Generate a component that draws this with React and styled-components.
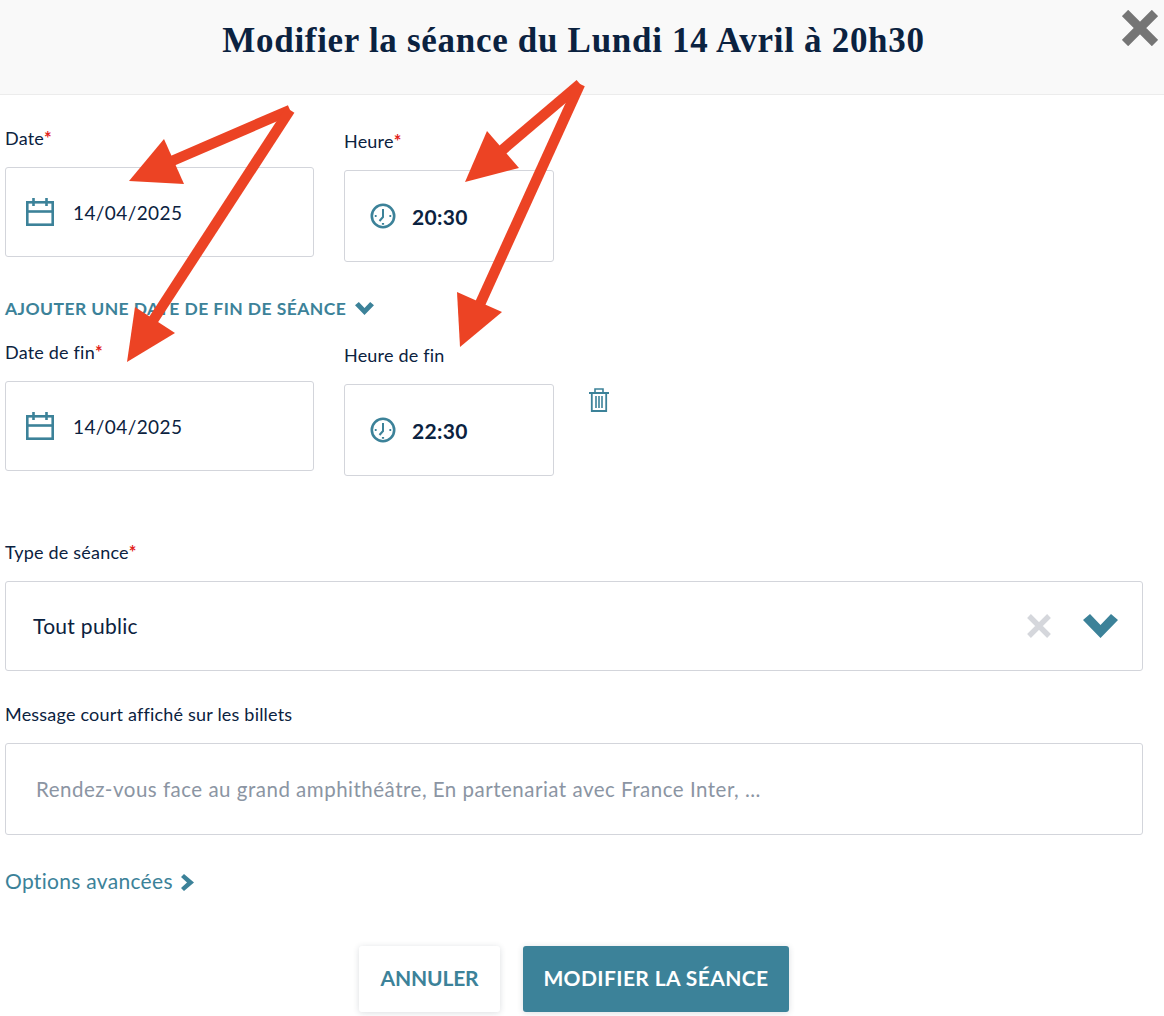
import React from 'react';
import styled, { createGlobalStyle } from 'styled-components';

const TEAL = '#3c8299';
const NAVY = '#0b2240';
const BORDER = '#d3d5db';
const RED = '#ec4324';

const GlobalStyle = createGlobalStyle`
  html, body {
    margin: 0;
    padding: 0;
    background: #fff;
  }
  body {
    font-family: Lato, "Open Sans", sans-serif;
    color: ${NAVY};
  }
`;

const Page = styled.div`
  position: relative;
  width: 1164px;
  height: 1016px;
  overflow: hidden;
`;

const Header = styled.header`
  box-sizing: border-box;
  height: 95px;
  padding: 19px 17px 0 0;
  background: #f9f9f9;
  border-bottom: 1px solid #ececec;
  text-align: center;
`;

const Title = styled.h1`
  margin: 0;
  font-family: "Liberation Serif", serif;
  font-weight: 700;
  font-size: 35px;
  line-height: 44px;
  letter-spacing: 0.7px;
  color: ${NAVY};
`;

const CloseButton = styled.button`
  position: absolute;
  top: 10px;
  right: 6px;
  width: 36px;
  height: 36px;
  padding: 0;
  border: none;
  background: none;
`;

const Form = styled.form`
  padding: 0 21px 0 5px;
`;

const DateRow = styled.div`
  display: flex;
  gap: 30px;
  padding-top: ${(props) => props.$top}px;
`;

const Field = styled.div`
  width: ${(props) => props.$width}px;
  padding-top: ${(props) => props.$offset || 0}px;
`;

const Label = styled.label`
  display: block;
  height: 24px;
  font-size: 18px;
  line-height: 22px;
  letter-spacing: 0.2px;
  margin-bottom: ${(props) => props.$gap}px;
  color: ${NAVY};
`;

const Star = styled.span`
  font-weight: 700;
  color: #e2231a;
`;

const InputBox = styled.div`
  box-sizing: border-box;
  display: flex;
  align-items: center;
  height: ${(props) => props.$height}px;
  padding-left: ${(props) => props.$pad}px;
  gap: ${(props) => props.$iconGap}px;
  border: 1px solid ${BORDER};
  border-radius: 3px;
  background: #fff;
`;

const DateValue = styled.span`
  font-size: 19px;
  letter-spacing: 0.4px;
  color: ${NAVY};
`;

const TimeValue = styled.span`
  font-size: 21px;
  font-weight: 700;
  letter-spacing: 0.3px;
  color: ${NAVY};
`;

const AddEndDate = styled.a`
  display: flex;
  align-items: center;
  gap: 9px;
  height: 24px;
  margin-top: 34px;
  font-size: 17.5px;
  font-weight: 700;
  letter-spacing: 0.42px;
  color: ${TEAL};
`;

const TrashButton = styled.button`
  align-self: flex-start;
  margin: 47px 0 0 5px;
  padding: 0;
  border: none;
  background: none;
  height: 24px;
`;

const TypeSection = styled.div`
  padding-top: 65px;
`;

const MessageSection = styled.div`
  padding-top: 32px;
`;

const SelectBox = styled.div`
  box-sizing: border-box;
  display: flex;
  align-items: center;
  justify-content: space-between;
  height: 90px;
  padding: 0 24px 0 27px;
  border: 1px solid ${BORDER};
  border-radius: 3px;
`;

const SelectValue = styled.span`
  padding-bottom: 2px;
  font-size: 21px;
  letter-spacing: 0.3px;
  color: ${NAVY};
`;

const SelectIcons = styled.div`
  display: flex;
  align-items: center;
  gap: 32px;
`;

const TextBox = styled.div`
  box-sizing: border-box;
  display: flex;
  align-items: center;
  height: 92px;
  padding-left: 30px;
  border: 1px solid ${BORDER};
  border-radius: 3px;
  font-size: 20.5px;
  letter-spacing: 0.5px;
  color: #8b95a3;
`;

const AdvancedLink = styled.a`
  display: flex;
  align-items: center;
  gap: 8px;
  height: 26px;
  margin-top: 32px;
  font-size: 21px;
  letter-spacing: 0.3px;
  color: ${TEAL};
`;

const Actions = styled.div`
  display: flex;
  gap: 23px;
  margin: 53px 0 0 354px;
`;

const ActionButton = styled.button`
  box-sizing: border-box;
  height: 66px;
  width: ${(props) => props.$width}px;
  padding: 0 0 3px;
  border: none;
  border-radius: 3px;
  font-family: inherit;
  font-size: 21px;
  font-weight: 700;
  letter-spacing: ${(props) => (props.$primary ? '0.4px' : '-0.15px')};
  background: ${(props) => (props.$primary ? TEAL : '#fff')};
  color: ${(props) => (props.$primary ? '#fff' : TEAL)};
  box-shadow: 0 1px 6px rgba(40, 50, 70, 0.16);
`;

const ArrowLayer = styled.svg`
  position: absolute;
  top: 0;
  left: 0;
  pointer-events: none;
`;

const RightChevronSvg = styled.svg`
  margin-top: 5px;
`;

const CalendarIcon = () => (
  <svg width="28" height="28" viewBox="0 0 28 28" fill="none" stroke={TEAL} strokeWidth="2.6">
    <rect x="1.3" y="4.3" width="25.4" height="22.4" />
    <path d="M1 13.5h26" />
    <path d="M7.5 0v8M20.5 0v8" />
  </svg>
);

const ClockIcon = () => (
  <svg width="26" height="26" viewBox="0 0 26 26" fill="none" stroke={TEAL}>
    <circle cx="13" cy="13" r="11.2" strokeWidth="2.6" />
    <path d="M13 6v8l-3.5 4" strokeWidth="2" />
    <path d="M4.8 13h1.8M19.4 13h1.8M13 20v1.8" strokeWidth="2.2" />
  </svg>
);

const TrashIcon = () => (
  <svg width="20" height="24" viewBox="0 0 20 24" fill="none" stroke={TEAL}>
    <path d="M0 5h20" strokeWidth="2" />
    <path d="M6 4.5V1h8v3.5" strokeWidth="1.6" />
    <path d="M2.8 5v18h14.4V5" strokeWidth="1.8" />
    <path d="M7 8v12M10 8v12M13 8v12" strokeWidth="1.6" />
  </svg>
);

const Cross = ({ size, color, width }) => (
  <svg width={size} height={size} viewBox="0 0 36 36">
    <path d="M3 3L33 33M33 3L3 33" stroke={color} strokeWidth={width} fill="none" />
  </svg>
);

const ChevronDown = ({ width, height }) => (
  <svg width={width} height={height} viewBox="0 0 35 24">
    <polygon points="0,6 7,0 17.5,11 28,0 35,6 17.5,24" fill={TEAL} />
  </svg>
);

const ChevronRight = () => (
  <RightChevronSvg width="13" height="17" viewBox="0 0 13 17">
    <polygon points="0,3 3,0 13,8.5 3,17 0,14 6,8.5" fill={TEAL} />
  </RightChevronSvg>
);

const ARROWS = [
  { tail: [290, 110], neck: [172, 161], head: '164,139 129,181 184,184' },
  { tail: [290, 110], neck: [152, 322], head: '135,307 175,333 127,362' },
  { tail: [580, 84], neck: [500, 152], head: '487,131 465,182 519,168' },
  { tail: [580, 84], neck: [480, 304], head: '457,292 502,312 460,347' },
];

const Arrows = () => (
  <ArrowLayer width="1164" height="1016" viewBox="0 0 1164 1016">
    {ARROWS.map((arrow) => (
      <g key={arrow.head} fill={RED} stroke={RED}>
        <line x1={arrow.tail[0]} y1={arrow.tail[1]} x2={arrow.neck[0]} y2={arrow.neck[1]} strokeWidth="10.5" />
        <polygon points={arrow.head} strokeWidth="0" />
      </g>
    ))}
  </ArrowLayer>
);

const DateField = ({ label, required, value }) => (
  <Field $width={309}>
    <Label $gap={16}>
      {label}
      {required && <Star>*</Star>}
    </Label>
    <InputBox $height={90} $pad={20} $iconGap={19}>
      <CalendarIcon />
      <DateValue>{value}</DateValue>
    </InputBox>
  </Field>
);

const TimeField = ({ label, required, value }) => (
  <Field $width={210} $offset={3}>
    <Label $gap={16}>
      {label}
      {required && <Star>*</Star>}
    </Label>
    <InputBox $height={92} $pad={25} $iconGap={16}>
      <ClockIcon />
      <TimeValue>{value}</TimeValue>
    </InputBox>
  </Field>
);

export default function App() {
  return (
    <Page>
      <GlobalStyle />
      <Header>
        <Title>Modifier la séance du Lundi 14 Avril à 20h30</Title>
      </Header>
      <CloseButton type="button">
        <Cross size={36} color="#757575" width={9} />
      </CloseButton>
      <Form>
        <DateRow $top={32}>
          <DateField label="Date" required value="14/04/2025" />
          <TimeField label="Heure" required value="20:30" />
        </DateRow>
        <AddEndDate>
          AJOUTER UNE DATE DE FIN DE SÉANCE
          <ChevronDown width={19} height={13} />
        </AddEndDate>
        <DateRow $top={21}>
          <DateField label="Date de fin" required value="14/04/2025" />
          <TimeField label="Heure de fin" value="22:30" />
          <TrashButton type="button">
            <TrashIcon />
          </TrashButton>
        </DateRow>
        <TypeSection>
          <Label $gap={16}>
            Type de séance<Star>*</Star>
          </Label>
          <SelectBox>
            <SelectValue>Tout public</SelectValue>
            <SelectIcons>
              <Cross size={24} color="#d5d7dc" width={8} />
              <ChevronDown width={35} height={24} />
            </SelectIcons>
          </SelectBox>
        </TypeSection>
        <MessageSection>
          <Label $gap={16}>Message court affiché sur les billets</Label>
          <TextBox>Rendez-vous face au grand amphithéâtre, En partenariat avec France Inter, ...</TextBox>
        </MessageSection>
        <AdvancedLink>
          Options avancées
          <ChevronRight />
        </AdvancedLink>
        <Actions>
          <ActionButton type="button" $width={141}>ANNULER</ActionButton>
          <ActionButton type="button" $width={266} $primary>MODIFIER LA SÉANCE</ActionButton>
        </Actions>
      </Form>
      <Arrows />
    </Page>
  );
}
